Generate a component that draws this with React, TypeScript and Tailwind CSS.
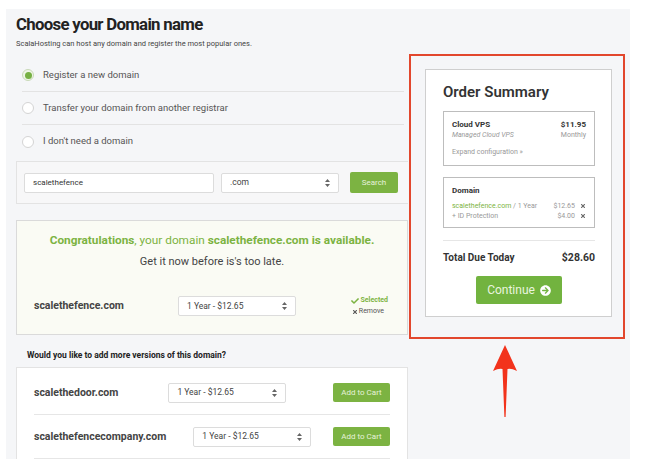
import { FaArrowCircleRight, FaCheck, FaTimes } from "react-icons/fa";

const radios = [
  { label: "Register a new domain", checked: true },
  { label: "Transfer your domain from another registrar", checked: false },
  { label: "I don't need a domain", checked: false },
];

const extras = [
  { name: "scalethedoor.com", gap: "ml-[50px]" },
  { name: "scalethefencecompany.com", gap: "ml-[27px]" },
];

const SelectArrows = () => (
  <svg width="5" height="8" viewBox="0 0 5 8" className="shrink-0">
    <path d="M2.5 0 L5 3 H0 Z M2.5 8 L5 5 H0 Z" fill="#666" />
  </svg>
);

const FakeSelect = ({ value, className = "" }: { value: string; className?: string }) => (
  <div
    className={`flex items-center justify-between w-[118px] h-[20px] px-[8px] bg-white border border-[#dcdcdc] rounded-[2px] text-[8.5px] text-[#444] ${className}`}
  >
    <span>{value}</span>
    <SelectArrows />
  </div>
);

const Radio = ({ checked }: { checked: boolean }) => (
  <span
    className={`flex items-center justify-center w-[12px] h-[12px] rounded-full border ${
      checked ? "border-[#c9d9b8] bg-[#eef5e6]" : "border-[#d4d4d4] bg-white"
    }`}
  >
    {checked && <span className="w-[7px] h-[7px] rounded-full bg-[#76b043]" />}
  </span>
);

const OrderSummary = () => (
  <div className="w-[216px] h-[285px] border-2 border-[#e2472d] pl-[14px] pt-[13px]">
    <div className="w-[187px] h-[248px] bg-white border border-[#cfcfcf] px-[17px] pt-[13px]">
      <h2 className="text-[15px] leading-[18px] font-semibold text-[#333]">Order Summary</h2>

      <div className="mt-[10px] w-[152px] h-[55px] border border-[#bdbdbd] px-[8px] pt-[8px]">
        <div className="flex justify-between text-[8px] leading-[10px]">
          <span className="font-bold text-[#333]">Cloud VPS</span>
          <span className="font-bold text-[#333]">$11.95</span>
        </div>
        <div className="flex justify-between text-[7px] leading-[10px] text-[#999]">
          <span className="italic">Managed Cloud VPS</span>
          <span>Monthly</span>
        </div>
        <div className="mt-[7px] text-[7px] leading-[10px] text-[#999]">Expand configuration »</div>
      </div>

      <div className="mt-[11px] w-[152px] h-[51px] border border-[#bdbdbd] px-[8px] pt-[8px]">
        <div className="text-[8px] leading-[10px] font-bold text-[#333]">Domain</div>
        <div className="mt-[5px] flex justify-between text-[7px] leading-[10px] text-[#999]">
          <span>
            <span className="text-[#7cb342]">scalethefence.com</span> / 1 Year
          </span>
          <span className="flex items-center gap-[5px]">
            $12.65 <FaTimes className="text-[#666] w-[6px] h-[6px]" />
          </span>
        </div>
        <div className="flex justify-between text-[7px] leading-[10px] text-[#999]">
          <span>+ ID Protection</span>
          <span className="flex items-center gap-[5px]">
            $4.00 <FaTimes className="text-[#666] w-[6px] h-[6px]" />
          </span>
        </div>
      </div>

      <div className="mt-[12px] w-[152px] border-t border-[#e6e6e6]" />

      <div className="mt-[10px] w-[152px] flex justify-between items-center text-[10px] leading-[14px] font-bold text-[#333]">
        <span>Total Due Today</span>
        <span className="text-[10.5px]">$28.60</span>
      </div>

      <div className="mt-[11px] flex justify-center w-[152px]">
        <button className="flex items-center gap-[5px] h-[28px] w-[86px] justify-center bg-[#72b33f] rounded-[2px] text-[12px] text-[#e9f5df]">
          Continue <FaArrowCircleRight className="w-[11px] h-[11px] text-white" />
        </button>
      </div>
    </div>
  </div>
);

export default function App() {
  return (
    <div className="relative w-[646px] h-[464px] bg-white font-['Roboto',sans-serif]">
      <div className="ml-[6px] pt-[9px]">
        <div className="flex w-[624px] h-[450px] bg-[#f5f6f8] overflow-hidden pl-[10px]">
          {/* left column */}
          <div className="w-[392px] shrink-0">
            <h1 className="mt-[5px] text-[16.8px] leading-[20px] font-bold tracking-[-0.7px] text-[#222]">
              Choose your Domain name
            </h1>
            <p className="mt-[5px] text-[7.5px] leading-[10px] text-[#444]">
              ScalaHosting can host any domain and register the most popular ones.
            </p>

            <div className="mt-[10px] ml-[6px] mr-[4px]">
              {radios.map((r, i) => (
                <div
                  key={r.label}
                  className={`flex items-center gap-[9px] h-[33px] ${i < radios.length - 1 ? "border-b border-[#e3e3e3]" : ""}`}
                >
                  <Radio checked={r.checked} />
                  <span className="text-[9.5px] text-[#555]">{r.label}</span>
                </div>
              ))}
            </div>

            <div className="mt-[3px] h-[43px] flex items-center gap-[7px] pl-[7px] border-y border-l border-[#e3e3e3] bg-[#f7f7f8]">
              <div className="w-[190px] h-[20px] bg-white border border-[#dcdcdc] rounded-[2px] pl-[8px] flex items-center text-[8px] text-[#333]">
                scalethefence
              </div>
              <FakeSelect value=".com" />
              <button className="ml-[4px] w-[48px] h-[21px] bg-[#7cb342] rounded-[2px] text-[8px] text-[#e6f2da]">Search</button>
            </div>

            <div className="mt-[16px] h-[115px] bg-[#fafbf4] border border-[#dadada] pt-[12px]">
              <p className="text-center text-[11.8px] leading-[14px] text-[#7cb342]">
                <span className="font-bold">Congratulations</span>, your domain{" "}
                <span className="font-bold">scalethefence.com is available.</span>
              </p>
              <p className="mt-[8px] text-center text-[11px] leading-[14px] text-[#444]">Get it now before is's too late.</p>
              <div className="mt-[24px] flex items-center pl-[17px] pr-[19px] h-[26px]">
                <span className="w-[144px] text-[10.5px] font-bold text-[#444]">scalethefence.com</span>
                <FakeSelect value="1 Year - $12.65" />
                <div className="ml-auto flex flex-col items-end text-[7px] leading-[11px]">
                  <span className="flex items-center gap-[2px] font-bold text-[#7cb342]">
                    <FaCheck className="w-[8px] h-[8px]" /> Selected
                  </span>
                  <span className="flex items-center gap-[1px] text-[#555] pr-[4px]">
                    <FaTimes className="w-[6px] h-[6px]" />
                    Remove
                  </span>
                </div>
              </div>
            </div>

            <p className="mt-[14px] pl-[11px] text-[8.5px] leading-[12px] font-bold text-[#222]">
              Would you like to add more versions of this domain?
            </p>

            <div className="mt-[6px] h-[120px] bg-white border border-[#e3e3e3] pt-[3px] px-[17px]">
              {extras.map((e) => (
                <div key={e.name} className="flex items-center h-[44px] border-b border-[#e6e6e6]">
                  <span className="text-[10.5px] font-bold text-[#444]">{e.name}</span>
                  <FakeSelect value="1 Year - $12.65" className={e.gap} />
                  <button className="ml-auto w-[57px] h-[19px] bg-[#7cb342] rounded-[2px] text-[8px] text-[#e6f2da]">
                    Add to Cart
                  </button>
                </div>
              ))}
            </div>
          </div>

          {/* right column */}
          <div className="ml-[1px] mt-[45px]">
            <OrderSummary />
          </div>
        </div>
      </div>

      {/* annotation arrow */}
      <svg className="absolute left-[492px] top-[345px]" width="26" height="74" viewBox="0 0 26 74">
        <path d="M13 0 L25 26 Q19 23 15.5 24 L13.6 72 L12.4 72 L10.5 24 Q7 23 1 26 Z" fill="#f2331c" />
      </svg>
    </div>
  );
}
